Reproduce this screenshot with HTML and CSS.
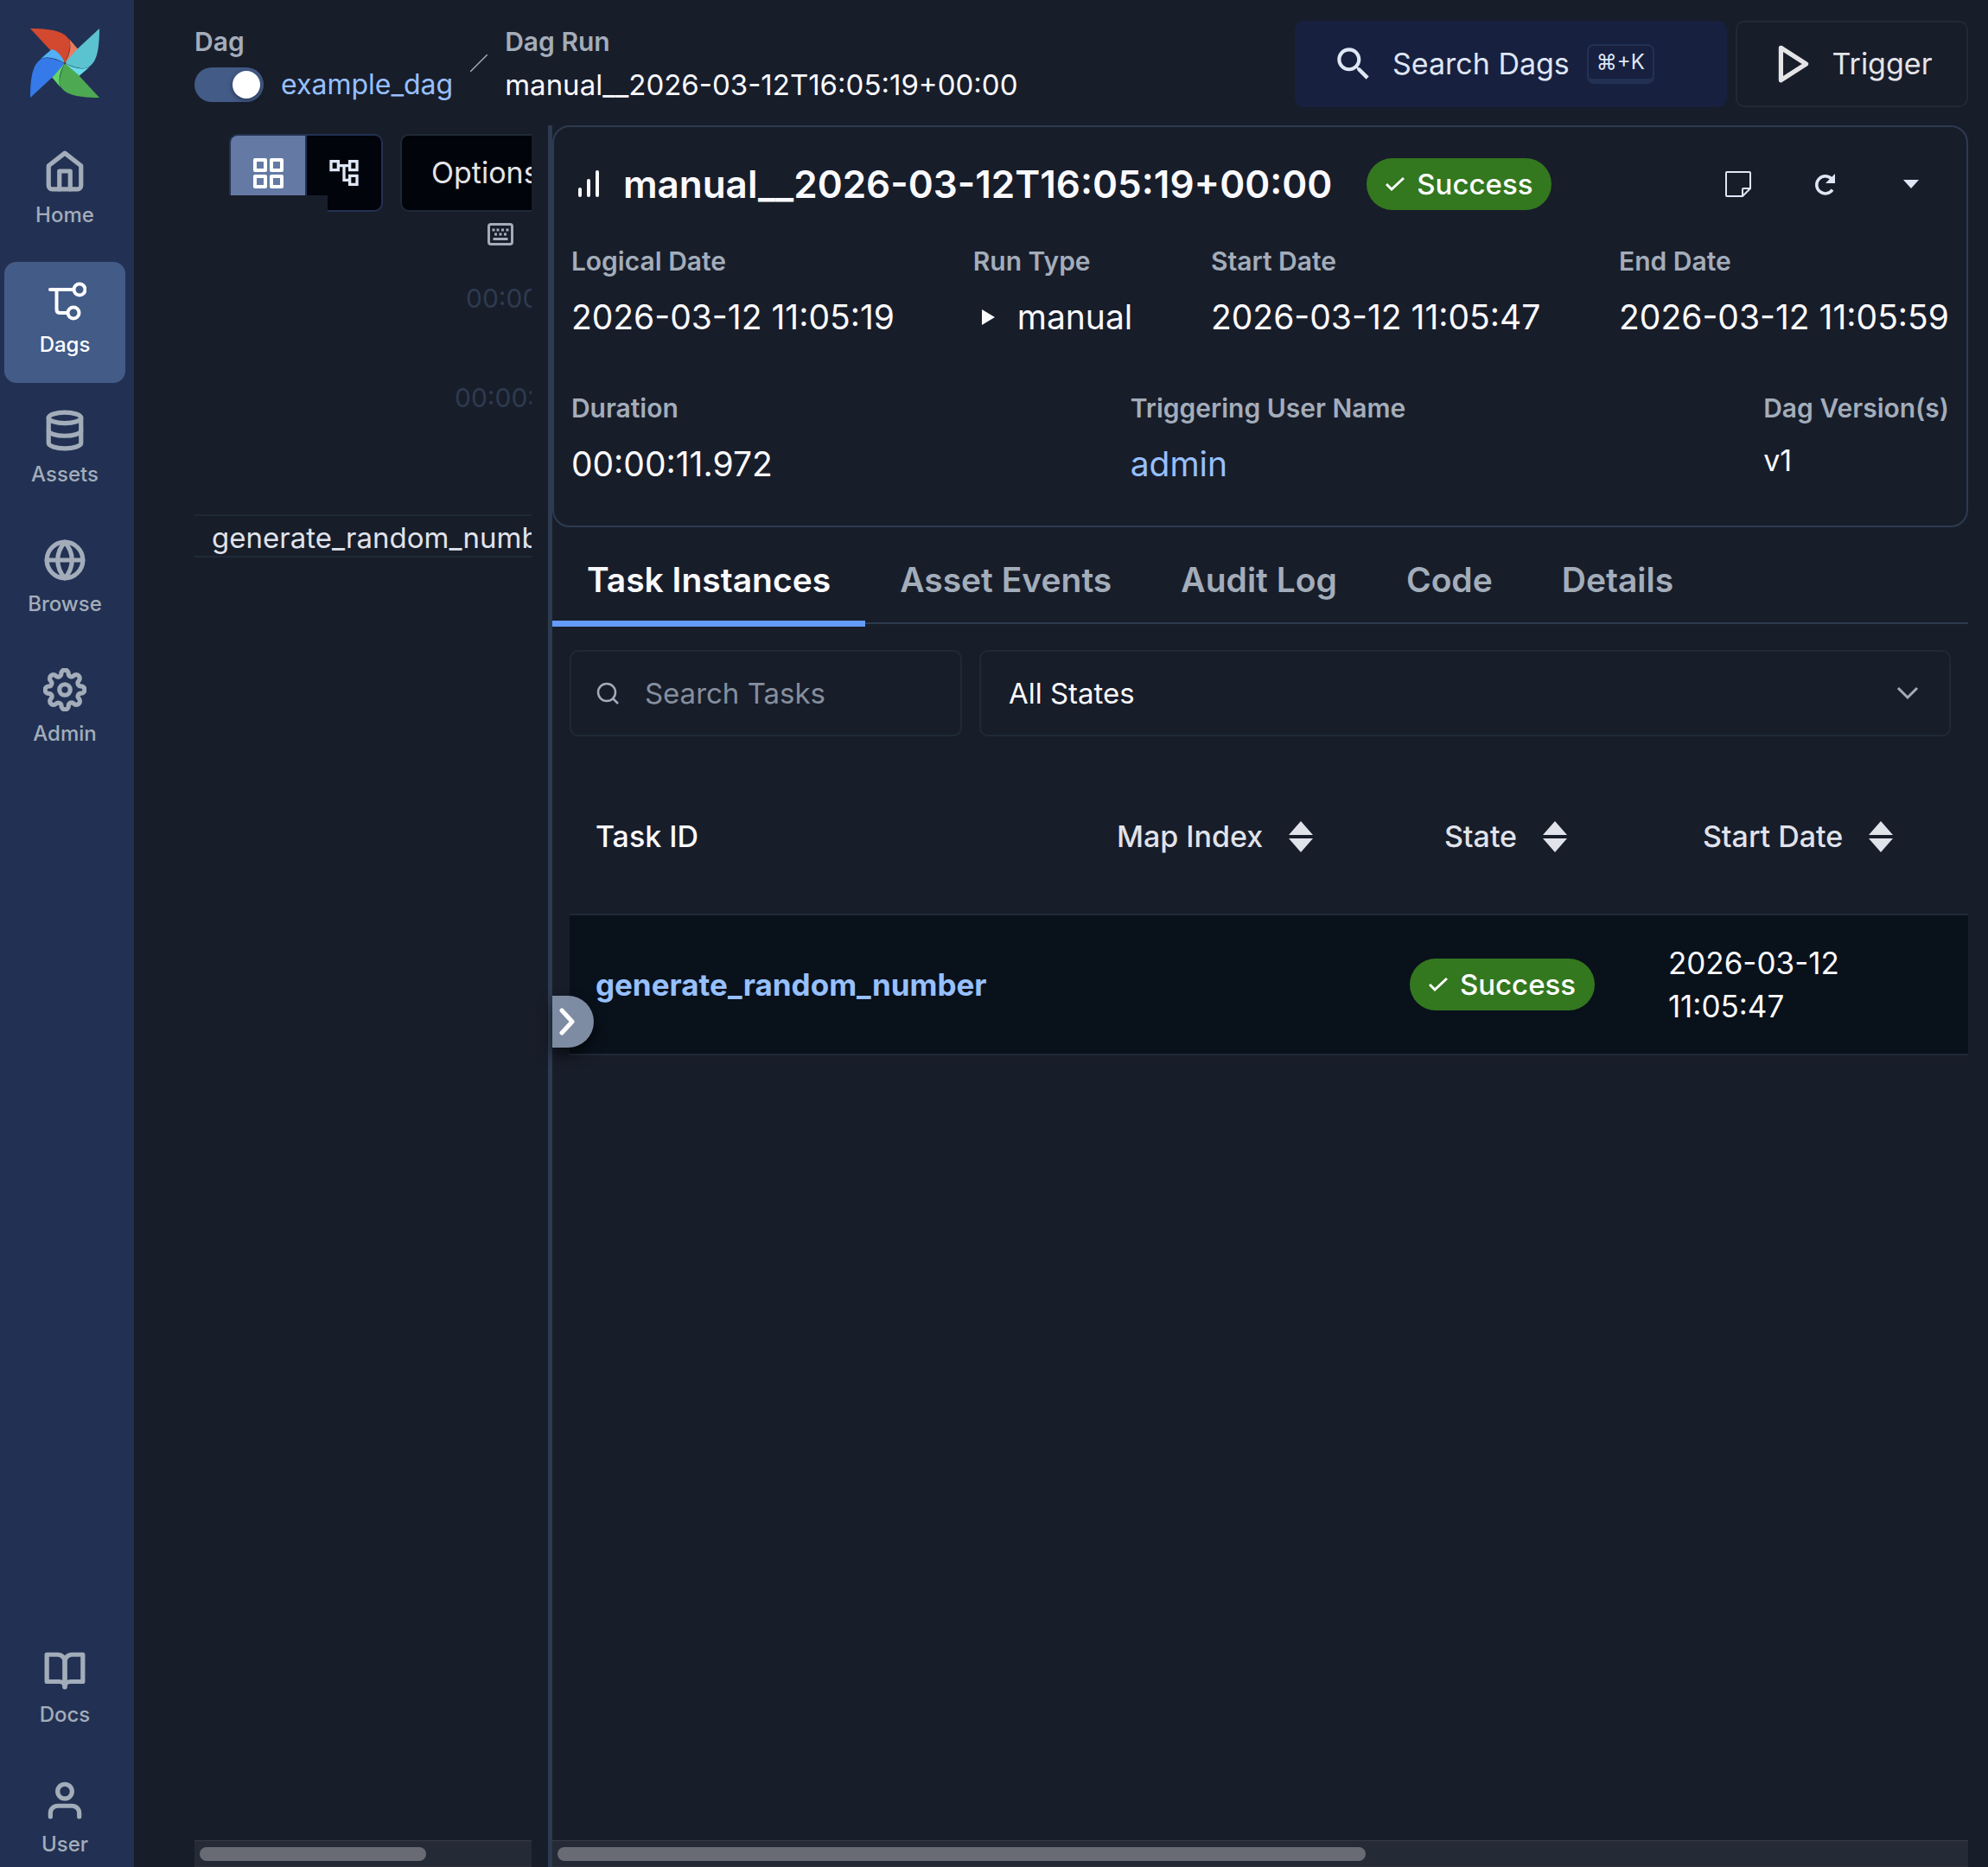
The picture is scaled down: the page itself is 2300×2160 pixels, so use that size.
FILE: index.html
```html
<!DOCTYPE html>
<html lang="en">
<head>
<meta charset="utf-8">
<meta name="viewport" content="width=device-width, initial-scale=1">
<title>manual__2026-03-12T16:05:19+00:00 - Airflow</title>
<link rel="stylesheet" href="styles.css">
</head>
<body>
<div class="app">
  <nav class="sidebar" aria-label="Main">
    <a class="logo" href="#" aria-label="Airflow">
      <svg width="80" height="80" viewBox="0 0 80 80">
        <g><path fill="#d2492f" d="M0 0L25 27L40 40C44 31 48 20 45 13C40 5 30 0 0 0Z"/><path fill="#ed7b5b" d="M45 12L57 26C58 32 50 37 40 40C46 30 48 20 45 12Z"/></g>
        <g transform="rotate(90 40 40)"><path fill="#5bc3d0" d="M0 0L25 27L40 40C44 31 48 20 45 13C40 5 30 0 0 0Z"/><path fill="#68dcea" d="M45 12L57 26C58 32 50 37 40 40C46 30 48 20 45 12Z"/></g>
        <g transform="rotate(180 40 40)"><path fill="#4eaa52" d="M0 0L25 27L40 40C44 31 48 20 45 13C40 5 30 0 0 0Z"/><path fill="#62d566" d="M45 12L57 26C58 32 50 37 40 40C46 30 48 20 45 12Z"/></g>
        <g transform="rotate(270 40 40)"><path fill="#357ae8" d="M0 0L25 27L40 40C44 31 48 20 45 13C40 5 30 0 0 0Z"/><path fill="#52b0f8" d="M45 12L57 26C58 32 50 37 40 40C46 30 48 20 45 12Z"/></g>
        <path fill="#d2492f" d="M20 21L25 24C31 25 37 32 40 40C43 31 45 25 44 20L30 14Z"/>
        <circle cx="40" cy="40" r="1.500" fill="#4b4648"/>
      </svg>
    </a>
    <a class="nav-item" href="#"><svg class="line" width="50" height="50" viewBox="0 0 24 24"><path d="M3 9l9-7 9 7v11a2 2 0 0 1-2 2H5a2 2 0 0 1-2-2z"/><path d="M9 22V12h6v10"/></svg><span>Home</span></a>
    <a class="nav-item active" href="#" aria-current="page"><svg width="50" height="50" viewBox="0 0 50 50" fill="none" stroke="currentColor" stroke-width="4" stroke-linecap="round"><path d="M8 12h27M15.500 12v23q0 4 4 4h8"/><circle cx="42" cy="12" r="6.500"/><circle cx="35" cy="39" r="6.500"/></svg><span>Dags</span></a>
    <a class="nav-item" href="#"><svg class="line" width="50" height="50" viewBox="0 0 24 24"><ellipse cx="12" cy="5" rx="9" ry="3"/><path d="M21 12c0 1.660-4 3-9 3s-9-1.340-9-3"/><path d="M3 5v14c0 1.660 4 3 9 3s9-1.340 9-3V5"/></svg><span>Assets</span></a>
    <a class="nav-item" href="#"><svg class="line" width="50" height="50" viewBox="0 0 24 24"><circle cx="12" cy="12" r="10"/><path d="M2 12h20"/><path d="M12 2a15.300 15.300 0 0 1 4 10 15.300 15.300 0 0 1-4 10 15.300 15.300 0 0 1-4-10 15.300 15.300 0 0 1 4-10z"/></svg><span>Browse</span></a>
    <a class="nav-item" href="#"><svg class="line" width="50" height="50" viewBox="0 0 24 24"><circle cx="12" cy="12" r="3"/><path d="M19.400 15a1.650 1.650 0 0 0 .33 1.820l.06.06a2 2 0 0 1 0 2.830 2 2 0 0 1-2.830 0l-.06-.06a1.650 1.650 0 0 0-1.820-.33 1.650 1.650 0 0 0-1 1.510V21a2 2 0 0 1-2 2 2 2 0 0 1-2-2v-.09A1.650 1.650 0 0 0 9 19.400a1.650 1.650 0 0 0-1.820.33l-.06.06a2 2 0 0 1-2.830 0 2 2 0 0 1 0-2.830l.06-.06a1.650 1.650 0 0 0 .33-1.820 1.650 1.650 0 0 0-1.510-1H3a2 2 0 0 1-2-2 2 2 0 0 1 2-2h.09A1.650 1.650 0 0 0 4.600 9a1.650 1.650 0 0 0-.33-1.820l-.06-.06a2 2 0 0 1 0-2.830 2 2 0 0 1 2.830 0l.06.06a1.650 1.650 0 0 0 1.820.33H9a1.650 1.650 0 0 0 1-1.510V3a2 2 0 0 1 2-2 2 2 0 0 1 2 2v.09a1.650 1.650 0 0 0 1 1.510 1.650 1.650 0 0 0 1.820-.33l.06-.06a2 2 0 0 1 2.830 0 2 2 0 0 1 0 2.830l-.06.06a1.650 1.650 0 0 0-.33 1.820V9a1.650 1.650 0 0 0 1.510 1H21a2 2 0 0 1 2 2 2 2 0 0 1-2 2h-.09a1.650 1.650 0 0 0-1.510 1z"/></svg><span>Admin</span></a>
    <div class="nav-bottom">
      <a class="nav-item" href="#"><svg class="line" width="50" height="50" viewBox="0 0 24 24"><path d="M2 3h6a4 4 0 0 1 4 4v14a3 3 0 0 0-3-3H2z"/><path d="M22 3h-6a4 4 0 0 0-4 4v14a3 3 0 0 1 3-3h7z"/></svg><span>Docs</span></a>
      <a class="nav-item" href="#"><svg class="line" width="50" height="50" viewBox="0 0 24 24"><path d="M20 21v-2a4 4 0 0 0-4-4H8a4 4 0 0 0-4 4v2"/><circle cx="12" cy="7" r="4"/></svg><span>User</span></a>
    </div>
  </nav>

  <div class="content">
    <header class="topbar">
      <div class="crumbs">
        <div class="crumb">
          <span class="label">Dag</span>
          <div class="crumb-row">
            <input class="switch" type="checkbox" role="switch" checked aria-label="Pause example_dag">
            <a class="link" href="#">example_dag</a>
          </div>
        </div>
        <svg class="slash" width="20" height="20" viewBox="0 0 20 20" stroke="#a1acba" stroke-width="1.500"><path d="M0 20L20 0"/></svg>
        <div class="crumb">
          <span class="label">Dag Run</span>
          <div class="crumb-row current">manual__2026-03-12T16:05:19+00:00</div>
        </div>
      </div>
      <div class="actions">
        <button class="btn search-dags" type="button">
          <svg width="50" height="50" viewBox="0 0 24 24" fill="currentColor"><path d="M15.500 14h-.79l-.28-.27C15.410 12.590 16 11.110 16 9.500 16 5.910 13.090 3 9.500 3S3 5.910 3 9.500 5.910 16 9.500 16c1.610 0 3.090-.59 4.230-1.570l.27.28v.79l5 4.990L20.490 19l-4.990-5zm-6 0C7.010 14 5 11.990 5 9.500S7.010 5 9.500 5 14 7.010 14 9.500 11.990 14 9.500 14z"/></svg>
          Search Dags <kbd>⌘+K</kbd>
        </button>
        <button class="btn trigger" type="button">
          <svg class="line" width="50" height="50" viewBox="0 0 24 24"><path d="M5 3l14 9-14 9z"/></svg>
          Trigger
        </button>
      </div>
    </header>

    <div class="panels">
      <section class="grid-panel" aria-label="Grid">
        <div class="grid-view">
          <div class="toolbar">
            <div class="view-toggle">
              <button class="on" type="button" aria-label="Grid view"><svg width="35" height="35" viewBox="0 0 35 35" fill="none" stroke="currentColor" stroke-width="4" stroke-linejoin="round"><path d="M2 2h12v12H2zM21 2h12v12H21zM2 21h12v12H2zM21 21h12v12H21z"/></svg></button>
              <button type="button" aria-label="Graph view"><svg width="40" height="40" viewBox="0 0 24 24" fill="currentColor"><path d="M22 11V3h-7v3H9V3H2v8h7V8h2v10h4v3h7v-8h-7v3h-2V8h2v3h7zM7 9H4V5h3v4zm10 6h3v4h-3v-4zm0-10h3v4h-3V5z"/></svg></button>
            </div>
            <button class="options" type="button">Options</button>
          </div>
          <div class="shortcuts"><svg width="30" height="26" viewBox="0 0 30 26" fill="none" stroke="currentColor" stroke-width="3"><rect x="1.500" y="1.500" width="27" height="23" rx="2.500"/><path d="M5.500 8h3M10.500 8h3M16 8h3M21.500 8h3M8 13h3M13.500 13h3M19 13h3M6.500 18.500h17"/></svg></div>
          <div class="tick">00:00:12</div>
          <div class="tick wide">00:00:06</div>
          <div class="task-row">generate_random_number</div>
        </div>
        <div class="scrollbar"><div class="thumb" style="width:69.3%"></div></div>
      </section>

      <main class="run-panel">
        <section class="card">
          <div class="card-head">
            <svg width="48" height="40" viewBox="0 0 48 40" fill="none" stroke="currentColor" stroke-width="4" stroke-linecap="round"><path d="M10 33v-7M20 33v-17M30 33v-27"/></svg>
            <h1>manual__2026-03-12T16:05:19+00:00</h1>
            <span class="badge"><svg width="22" height="18" viewBox="0 0 22 18" fill="none" stroke="currentColor" stroke-width="3"><path d="M1 9l6 6L21 2"/></svg>Success</span>
            <div class="card-actions">
              <button type="button" aria-label="Add a note"><svg width="32" height="32" viewBox="0 0 32 32" fill="none" stroke="currentColor" stroke-width="2"><path d="M3 2h26q1 0 1 1v18l-9 9H3q-1 0-1-1V3q0-1 1-1zM30 21h-8q-1 0-1 1v8"/></svg></button>
              <button type="button" aria-label="Clear run"><svg width="30" height="30" viewBox="0 0 30 30" fill="none" stroke="currentColor" stroke-width="3.500"><path d="M24 21.500A10 10 0 1 1 23 9"/><path fill="currentColor" stroke="none" d="M27 3v11H16z"/></svg></button>
              <button type="button" aria-label="More"><svg width="18" height="10" viewBox="0 0 18 10" fill="currentColor"><path d="M0 0h18L9 10z"/></svg></button>
            </div>
          </div>
          <dl class="stats">
            <div><dt>Logical Date</dt><dd>2026-03-12 11:05:19</dd></div>
            <div><dt>Run Type</dt><dd class="run-type"><svg width="16" height="20" viewBox="0 0 16 20" fill="currentColor"><path d="M1 1l15 9-15 9z"/></svg>manual</dd></div>
            <div><dt>Start Date</dt><dd>2026-03-12 11:05:47</dd></div>
            <div><dt>End Date</dt><dd>2026-03-12 11:05:59</dd></div>
          </dl>
          <dl class="stats">
            <div><dt>Duration</dt><dd>00:00:11.972</dd></div>
            <div><dt>Triggering User Name</dt><dd><a class="link" href="#">admin</a></dd></div>
            <div><dt>Dag Version(s)</dt><dd class="version">v1</dd></div>
          </dl>
        </section>

        <nav class="tabs" aria-label="Run">
          <a class="current" href="#" aria-current="page">Task Instances</a>
          <a href="#">Asset Events</a>
          <a href="#">Audit Log</a>
          <a href="#">Code</a>
          <a href="#">Details</a>
        </nav>

        <div class="filters">
          <label class="search-box">
            <svg width="26" height="26" viewBox="0 0 26 26" fill="none" stroke="currentColor" stroke-width="2.500"><circle cx="12" cy="12" r="10"/><path d="M19 19l6 6"/></svg>
            <input type="search" placeholder="Search Tasks" aria-label="Search Tasks">
          </label>
          <label class="state-box">
            <select aria-label="State"><option>All States</option></select>
            <svg width="26" height="16" viewBox="0 0 26 16" fill="none" stroke="currentColor" stroke-width="3"><path d="M2 2l11 11L24 2"/></svg>
          </label>
        </div>

        <table>
          <colgroup><col class="c-id"><col class="c-map"><col class="c-state"><col></colgroup>
          <thead>
            <tr>
              <th scope="col">Task ID</th>
              <th scope="col"><button type="button">Map Index <svg width="28" height="36" viewBox="0 0 28 36" fill="currentColor"><path d="M14 0l14 16H0zM0 20h28L14 36z"/></svg></button></th>
              <th scope="col"><button type="button">State <svg width="28" height="36" viewBox="0 0 28 36" fill="currentColor"><path d="M14 0l14 16H0zM0 20h28L14 36z"/></svg></button></th>
              <th scope="col"><button type="button">Start Date <svg width="28" height="36" viewBox="0 0 28 36" fill="currentColor"><path d="M14 0l14 16H0zM0 20h28L14 36z"/></svg></button></th>
            </tr>
          </thead>
          <tbody>
            <tr>
              <td><a class="link strong" href="#">generate_random_number</a></td>
              <td></td>
              <td><span class="badge"><svg width="22" height="18" viewBox="0 0 22 18" fill="none" stroke="currentColor" stroke-width="3"><path d="M1 9l6 6L21 2"/></svg>Success</span></td>
              <td>2026-03-12<br>11:05:47</td>
            </tr>
          </tbody>
        </table>
        <button class="collapse" type="button" aria-label="Expand panel"><svg width="20" height="32" viewBox="0 0 20 32" fill="none" stroke="currentColor" stroke-width="5" stroke-linecap="round" stroke-linejoin="round"><path d="M3 3l12 13L3 29"/></svg></button>
        <div class="scrollbar"><div class="thumb" style="width:57.5%"></div></div>
      </main>
    </div>
  </div>
  <div class="popover"></div>
</div>
</body>
</html>
```
FILE: styles.css
```css
* {
  box-sizing: border-box;
}

:root {
  --bg: #181d2a;
  --nav: #223153;
  --line: #2d3b50;
  --line-soft: #1f2a37;
  --fg: #fafafe;
  --fg-soft: #e0e3ea;
  --muted: #a3adba;
  --link: #97c0ff;
}

body {
  margin: 0;
  background: var(--bg);
  color: var(--fg);
  font-family: Inter, "Liberation Sans", sans-serif;
  font-size: 34px;
  line-height: 50px;
}

svg {
  display: block;
  flex: none;
}

.line {
  fill: none;
  stroke: currentColor;
  stroke-width: 2.5;
  stroke-linecap: round;
  stroke-linejoin: round;
}

a {
  color: inherit;
  text-decoration: none;
}

button {
  margin: 0;
  padding: 0;
  border: 0;
  background: none;
  color: inherit;
  font: inherit;
  display: flex;
  align-items: center;
  justify-content: center;
}

.link {
  color: var(--link);
}

.strong {
  font-weight: 700;
}

.app {
  position: relative;
  display: flex;
  height: 100vh;
  overflow: hidden;
}

/* Sidebar */
.sidebar {
  flex: 0 0 155px;
  display: flex;
  flex-direction: column;
  gap: 10px;
  padding: 33px 10px 0 5px;
  background: var(--nav);
  color: var(--muted);
}

.logo {
  align-self: center;
  margin-bottom: 30px;
}

.nav-item {
  display: flex;
  flex-direction: column;
  align-items: center;
  gap: 9px;
  height: 140px;
  padding-top: 20px;
  border-radius: 14px;
  font-size: 24px;
  font-weight: 500;
  line-height: 34px;
}

.nav-item.active {
  background: #435b87;
  color: #fff;
}

.nav-bottom {
  display: flex;
  flex-direction: column;
  gap: 10px;
  margin-top: auto;
  margin-bottom: -18px;
}

/* Top bar */
.content {
  flex: 1;
  min-width: 0;
  display: flex;
  flex-direction: column;
  padding: 0 23px 0 70px;
}

.topbar {
  display: flex;
  justify-content: space-between;
  align-items: flex-start;
  height: 145px;
  padding-top: 24px;
}

.crumbs {
  display: flex;
  align-items: center;
  gap: 20px;
  margin-top: -2px;
}

.label,
dt {
  color: var(--muted);
  font-size: 30px;
  font-weight: 600;
}

.crumb-row {
  display: flex;
  align-items: center;
  gap: 20px;
  font-size: 32px;
}

.crumb-row.current {
  font-size: 33px;
}

.switch {
  appearance: none;
  width: 80px;
  height: 40px;
  margin: 0;
  padding: 4px;
  border-radius: 20px;
  background: #435b87;
  display: flex;
  justify-content: flex-end;
}

.switch::before {
  content: "";
  width: 32px;
  height: 32px;
  border-radius: 50%;
  background: #fff;
  box-shadow: 0 2px 6px #0006;
}

.actions {
  display: flex;
  gap: 10px;
}

.btn {
  height: 100px;
  border-radius: 10px;
  color: #dfe6f5;
}

.search-dags {
  width: 500px;
  justify-content: flex-start;
  gap: 20px;
  padding-left: 43px;
  background: #18203f;
}

kbd {
  height: 46px;
  padding: 0 9px;
  border: 2px solid #223153;
  border-bottom-width: 6px;
  border-radius: 8px;
  font: 24px/38px Inter, "DejaVu Sans", sans-serif;
}

.trigger {
  width: 269px;
  gap: 20px;
  border: 2px solid var(--line-soft);
  color: #e4e4e7;
}

/* Panels */
.panels {
  flex: 1;
  min-height: 0;
  display: flex;
}

.grid-panel,
.run-panel {
  display: flex;
  flex-direction: column;
  justify-content: space-between;
}

.grid-panel {
  flex: 0 0 19%;
  min-width: 0;
  overflow: hidden;
  margin-right: 19px;
}

.grid-view {
  white-space: nowrap;
}

.toolbar {
  display: flex;
  gap: 20px;
  padding: 10px 0 0 40px;
}

.view-toggle {
  flex: none;
  display: flex;
  gap: 2px;
  border: 2px solid var(--nav);
  border-radius: 10px;
  background: var(--nav);
  overflow: hidden;
}

.view-toggle button {
  width: 86px;
  height: 86px;
  background: #01040b;
  color: #dfe6f5;
}

.view-toggle .on {
  background: #647aa5;
  color: #fff;
}

.options {
  flex: none;
  height: 90px;
  padding: 0 34px;
  border: 2px solid var(--line-soft);
  border-radius: 10px;
  background: #01040b;
  color: #e4e4e7;
}

.shortcuts {
  display: flex;
  justify-content: flex-end;
  padding: 13px 21px 0 0;
  color: var(--muted);
}

.tick {
  margin-top: 36px;
  padding-left: 314px;
  color: #2d3b50;
  font-size: 30px;
}

.tick.wide {
  margin: 65px 0 110px;
  padding-left: 301px;
}

.task-row {
  height: 50px;
  padding-left: 20px;
  border-top: 2px solid var(--line-soft);
  border-bottom: 2px solid var(--line-soft);
  color: var(--fg-soft);
  font-size: 33px;
  line-height: 50px;
}

.scrollbar {
  height: 31px;
  padding: 7px 6px;
  border-top: 1px solid #363a45;
  border-bottom: 1px solid #2c303b;
  background: #242a36;
}

.thumb {
  height: 16px;
  border-radius: 8px;
  background: #686b74;
}

/* Run details */
.run-panel {
  position: relative;
  flex: 1;
  min-width: 0;
  border-left: 5px solid var(--line);
}

.run-panel .scrollbar {
  margin-top: auto;
}

.card {
  padding: 35px 20px 39px;
  border: 2px solid var(--line);
  border-radius: 20px;
}

.card-head {
  display: flex;
  align-items: center;
  height: 62px;
}

h1 {
  margin: 0 40px 0 12px;
  font-size: 44px;
  font-weight: 600;
}

.badge {
  display: inline-flex;
  align-items: center;
  gap: 14px;
  height: 60px;
  padding: 0 22px;
  border-radius: 30px;
  background: #33771f;
  color: #fff;
  font-size: 33px;
  font-weight: 500;
}

.card-actions {
  display: flex;
  margin-left: auto;
  margin-right: -6px;
  color: #dfe6f5;
}

.card-actions button {
  width: 100px;
}

.stats {
  display: flex;
  justify-content: space-between;
  margin: 50px 0 0;
}

.stats:first-of-type {
  margin-top: 35px;
}

.stats div {
  display: flex;
  flex-direction: column;
  gap: 10px;
}

dt {
  line-height: 46px;
}

dd {
  margin: 0;
  font-size: 39px;
  line-height: 64px;
}

.run-type {
  display: flex;
  align-items: center;
  gap: 26px;
  padding-left: 9px;
}

.version {
  font-size: 34px;
  line-height: 56px;
}

.tabs {
  display: flex;
  height: 112px;
  border-bottom: 2px solid var(--line);
  color: var(--muted);
  font-size: 39px;
  font-weight: 600;
}

.tabs a {
  height: 115px;
  padding: 36px 40px 0;
}

.tabs .current {
  border-bottom: 7px solid #649bff;
  color: var(--fg);
}

.filters {
  display: flex;
  gap: 20px;
  padding: 30px 20px 0;
  font-size: 33px;
}

.filters label {
  display: flex;
  align-items: center;
  min-width: 0;
  height: 100px;
  border: 2px solid var(--line-soft);
  border-radius: 10px;
  color: var(--muted);
}

.search-box {
  flex: 0 0 454px;
  gap: 30px;
  padding: 0 29px;
}

.state-box {
  flex: 1;
  padding: 0 35px 0 32px;
}

.filters input,
.filters select {
  appearance: none;
  flex: 1;
  min-width: 0;
  padding: 0;
  border: 0;
  outline: 0;
  background: none;
  color: var(--fg);
  font: inherit;
}

.filters input::placeholder {
  color: #858f9e;
  opacity: 1;
}

table {
  width: calc(100% - 20px);
  margin: 26px 0 0 20px;
  border-collapse: collapse;
  table-layout: fixed;
}

.c-id {
  width: 563px;
}

.c-map {
  width: 379px;
}

.c-state {
  width: 299px;
}

th,
td {
  padding: 0 30px;
  text-align: left;
}

th {
  height: 180px;
  font-weight: 500;
}

th button {
  gap: 30px;
  padding-left: 40px;
  color: var(--fg-soft);
}

td {
  height: 162px;
  border-top: 2px solid var(--line-soft);
  border-bottom: 2px solid var(--line-soft);
  background: #09111b;
  font-size: 35px;
}

td .badge {
  vertical-align: middle;
}

.collapse {
  position: absolute;
  left: 0;
  top: calc(50% - 1px);
  width: 48px;
  height: 60px;
  padding-right: 12px;
  border-radius: 0 30px 30px 0;
  background: #7d8ca2;
  color: #fff;
  box-shadow: 0 8px 16px #0009;
}

.popover {
  position: absolute;
  left: 155px;
  top: 226px;
  width: 224px;
  height: 49px;
  background: var(--bg);
}
```
